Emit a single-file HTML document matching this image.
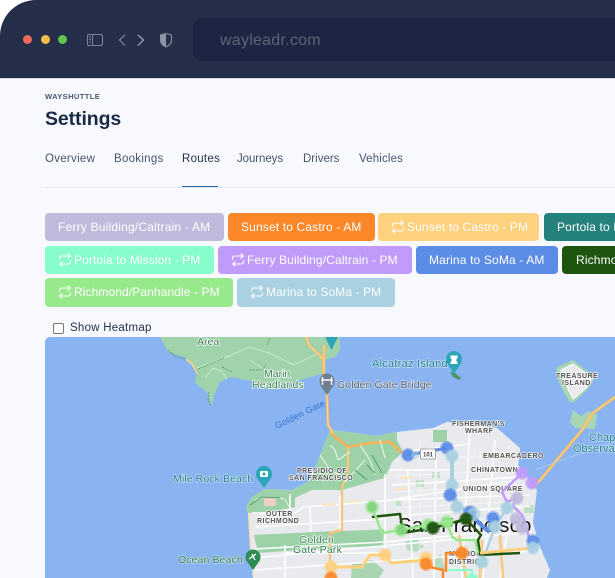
<!DOCTYPE html>
<html><head><meta charset="utf-8"><style>
html,body{margin:0;padding:0;width:615px;height:578px;overflow:hidden;background:#fff}
body{position:relative;font-family:"Liberation Sans",sans-serif}
.a{position:absolute}
.page{left:0;top:79px;width:615px;height:499px;background:#f8f9ff}
.bar{left:0;top:0;width:640px;height:78px;background:#252f4a;border-top-left-radius:36px;border-bottom:1px solid #d5d8e0}
.addr{left:193px;top:18px;width:440px;height:43px;background:#1c2642;border-radius:9px}
.url{left:220px;top:32px;font-size:16px;color:#5b6479;letter-spacing:.25px;line-height:18px}
.dot{width:9px;height:9px;border-radius:50%;top:35px}
.t{top:152px;font-size:11.5px;line-height:14px;color:#47546d;letter-spacing:.28px;white-space:nowrap}
.c{height:28px;border-radius:4px;color:#fff;font-size:12px;line-height:28px;white-space:nowrap;overflow:hidden;letter-spacing:.15px;box-sizing:border-box}
.c svg{position:absolute;left:13px;top:7px}
.c span{position:absolute;top:0}
</style></head><body>
<div class="a page"></div>
<div class="a bar"></div>
<div class="a addr"></div>
<div class="a url">wayleadr.com</div>
<div class="a dot" style="left:23px;background:#ee6a5f"></div>
<div class="a dot" style="left:41px;background:#f5bd4f"></div>
<div class="a dot" style="left:58px;background:#61c454"></div>
<svg class="a" style="left:80px;top:25px" width="100" height="30" viewBox="0 0 100 30" fill="none">
<rect x="7.500" y="9.500" width="15" height="11" rx="1.500" stroke="#7b8496"/><path d="M12.500 9.500v11" stroke="#7b8496"/><path d="M9 12h2M9 14.500h2M9 17h2" stroke="#7b8496"/>
<path d="M45 10l-5.500 5 5.500 5.500" stroke="#7b8496" stroke-width="1.200"/><path d="M58 10l5.500 5-5.500 5.500" stroke="#a4abb8" stroke-width="1.200"/>
<path d="M86 8.500l5.500 1.500v5.500c0 3-2.500 5-5.500 6.500-3-1.500-5.500-3.500-5.500-6.500V10z" stroke="#8c96a6" fill="#252f4a"/><path d="M86 8.500l-5.500 1.500v5.500c0 3 2.500 5 5.500 6.500z" fill="#8c96a6"/>
</svg>

<div class="a" style="left:45px;top:92px;font-size:7.500px;line-height:10px;font-weight:bold;letter-spacing:.42px;color:#4a566e">WAYSHUTTLE</div>
<div class="a" style="left:45px;top:107px;font-size:19.500px;line-height:25px;font-weight:bold;letter-spacing:-.1px;color:#1b2a45">Settings</div>
<div class="a t" style="left:45px">Overview</div>
<div class="a t" style="left:114px">Bookings</div>
<div class="a t" style="left:182px;color:#25324c">Routes</div>
<div class="a t" style="left:237px;letter-spacing:-.08px">Journeys</div>
<div class="a t" style="left:303px;letter-spacing:0">Drivers</div>
<div class="a t" style="left:359px;letter-spacing:.15px">Vehicles</div>
<div class="a" style="left:45px;top:187px;width:570px;height:1px;background:#e3e9f2"></div>
<div class="a" style="left:182px;top:186px;width:36px;height:1px;background:#2b68b0"></div>

<svg width="0" height="0" style="position:absolute"><defs><g id="r" fill="none" stroke="#fff" stroke-width="1.100" stroke-linecap="round" stroke-linejoin="round"><path d="M1.500 6.500V5a2 2 0 0 1 2-2h8.500M10 .8L12.300 3 10 5.200M12.500 7.500V9a2 2 0 0 1-2 2H2M4 8.800L1.700 11 4 13.200"/></g></defs></svg>

<div class="a c" style="left:45px;top:213px;width:179px;background:#c0bbdc"><span style="left:13px;letter-spacing:.2px">Ferry Building/Caltrain - AM</span></div>
<div class="a c" style="left:228px;top:213px;width:147px;background:#fb8728"><span style="left:13px">Sunset to Castro - AM</span></div>
<div class="a c" style="left:378px;top:213px;width:161px;background:#fed17f"><svg width="14" height="14"><use href="#r"/></svg><span style="left:29px">Sunset to Castro - PM</span></div>
<div class="a c" style="left:544px;top:213px;width:90px;background:#25817b;border-radius:4px 0 0 4px"><span style="left:13px">Portola to Mission</span></div>
<div class="a c" style="left:45px;top:246px;width:169px;background:#87fdcb"><svg width="14" height="14"><use href="#r"/></svg><span style="left:29px;letter-spacing:.1px">Portola to Mission - PM</span></div>
<div class="a c" style="left:218px;top:246px;width:194px;background:#c09bf9"><svg width="14" height="14"><use href="#r"/></svg><span style="left:29px;letter-spacing:.12px">Ferry Building/Caltrain - PM</span></div>
<div class="a c" style="left:416px;top:246px;width:142px;background:#5b8ce6"><span style="left:13px">Marina to SoMa - AM</span></div>
<div class="a c" style="left:562px;top:246px;width:70px;background:#1f540f;border-radius:4px 0 0 4px"><span style="left:14px">Richmond/Panhandle</span></div>
<div class="a c" style="left:45px;top:278px;width:188px;height:29px;background:#98e88c"><svg width="14" height="14"><use href="#r"/></svg><span style="left:29px;letter-spacing:.1px">Richmond/Panhandle - PM</span></div>
<div class="a c" style="left:237px;top:278px;width:158px;height:29px;background:#a9d1e1"><svg width="14" height="14"><use href="#r"/></svg><span style="left:29px;letter-spacing:.1px">Marina to SoMa - PM</span></div>

<div class="a" style="left:53px;top:323px;width:9px;height:9px;border:1px solid #767676;border-radius:2px;background:#fff"></div>
<div class="a" style="left:70px;top:321px;font-size:11.500px;line-height:14px;color:#25324c;letter-spacing:.25px">Show Heatmap</div>

<svg class="a" style="left:0;top:0" width="615" height="578" viewBox="0 0 615 578">
<defs><clipPath id="m"><path d="M45 578V342a5 5 0 0 1 5-5H615V578z"/></clipPath>
<clipPath id="sf"><path id="sfp" d="M253 578L250 550 248 513 246 507 252 497 265 489 292 490 308 482 317 463 325 443 330 430 350 432 375 436 397 432 433 428 447 422 470 424 497 428 520 448 518 465 537 490 533 523 540 547 550 570 547 578z"/></clipPath></defs>
<g clip-path="url(#m)">
<rect x="45" y="337" width="570" height="241" fill="#8ab4f1"/>
<!-- Marin -->
<path d="M160 337L168 352 187 358 197 372 195 383 207 392 212 407 214 395 220 382 230 377 252 381 273 390 290 383 307 378 322 374 324 360 335 357 340 350 340 337z" fill="#a0d3ab"/>
<path d="M197 368l10-4 22-8 20-9 20 6 25 12 25-12M205 378l8-10 8 3 6 8M250 360l15 10 15 2 12 6" fill="none" stroke="#c9e7cd" stroke-width="1"/>
<path d="M168 350l8 7 10 2 10 10 3 4M209 392l-1 8 3 6M198 369l14-6 12-5M222 367l10 5M250 370l12 0 4-6M270 338l-3 7" fill="none" stroke="#4f9a63" stroke-width=".8" stroke-dasharray="2 1"/>
<path d="M186 359l6 5 6 10" fill="none" stroke="#f7d48f" stroke-width="1.800"/>
<path d="M306 337l3 8 8 8 6 6 1 18" fill="none" stroke="#f3b45c" stroke-width="2.800"/>
<path d="M306 337l3 8 8 8 6 6 1 18" fill="none" stroke="#fbd89b" stroke-width="1.300"/>
<!-- Alcatraz, Treasure -->
<path d="M450 372l5 1 6 5-2 2-6-3z" fill="#4e9464"/>
<path d="M557 367l16-7 18 14 3 6-7 10-14 13-4-2-8-14-5-12z" fill="#a6d7b2"/>
<path d="M561 370l12-6 16 12 2 4-5 8-13 11-5-10-5-12z" fill="#e8eaed" stroke="#fff"/>
<path d="M573 410l-3 12 5 6 20 1 2-14-8-4-8 5z" fill="#a6d7b2"/>
<!-- SF -->
<use href="#sfp" fill="#e8eaed"/>
<g clip-path="url(#sf)">
<path d="M248 513L270 512 295 507 295 498 312 490 342 490 370 482 385 478 392 462 403 452 397 440 397 428 330 425 320 440 300 480 262 486 244 505z" fill="#9dd2a8"/>
<path d="M254 535l60-3 54-2 16-1-1 17-55 2-70 5z" fill="#9dd2a8"/>
<path d="M433 430h14v12h-14z" fill="#9dd2a8"/>
<path d="M264 497h12v9h-12z" fill="#eecfc8"/>
<path d="M352 564l20-4 12 10-5 8h-28z" fill="#a9d5b2"/>
<path d="M405 541l12-2 7 8-8 5-9-2zM441 554l-8 6 4 10h8z" fill="#b6dcc0"/>
<path d="M416 480h8v7h-8zM432 472h8v6h-8zM396 500h5v6h-5zM524 505h10v8h-10z" fill="#bfe0c5"/>
<g fill="none" stroke="#fff" stroke-width="1.500">
<path d="M252 513h43l8-6 80-6 130-20M255 527l128-8M254 549l130-7 150-14M290 516v-22M310 507l1 25M340 496v35M385 474v80M408 470l5 108M436 450l-2 128M470 424l-8 154M495 440l-12 138M520 450l-20 128M253 558l280-26M255 570l290-20"/>
<path d="M390 470h60M392 485l130-8M395 500l135-5M398 516l132-10M400 452l70-8M285 545v33M286 553l100 0"/>
</g>
<g fill="none" stroke="#f6f7f8" stroke-width=".700"><path d="M420 442v130M450 440v130M480 445v130M395 460l130-6M395 476l130-6M395 492l130-7M395 508l130-7M460 520l40 30"/></g>
<path d="M248 513l4 65" fill="none" stroke="#f7e4b5" stroke-width="3.500"/>
<path d="M322 505l14-1M347 502l14-1M450 508l20-1M400 478l12-1M395 489l12-1" stroke="#fbe6bc" stroke-width="2"/>
<path d="M330 430l4 6 14 11 22-4 20-1 12 11" fill="none" stroke="#f3b45c" stroke-width="2.800"/>
<path d="M348 447v26l-6 14v43l-12 3v30" fill="none" stroke="#f3b45c" stroke-width="2.200"/>
<path d="M348 447v26l-6 14v43l-12 3v30" fill="none" stroke="#fcd99a" stroke-width="1"/>
<path d="M459 535l7 43M482 540l-2 38M500 535l3 43" fill="none" stroke="#f6bd65" stroke-width="2.500"/>
<path d="M459 535l7 43M482 540l-2 38M500 535l3 43" fill="none" stroke="#fbd99b" stroke-width="1"/>
<path d="M330 445l5 5 3 10 12-8M300 480l20-10M360 445l10 15 5 15M365 460l-20 22M380 440l5 18M255 500l10-3 20 2 4 8M320 455l10 15 10 5" fill="none" stroke="#fff" stroke-width=".8"/>
<path d="M355 470l12 10M372 455l10 18M367 465l8 8M250 505l12-8 18 1" stroke="#4d9a63" stroke-width=".9" fill="none"/>
</g>
<!-- bridge -->
<path d="M324 345v33l3 17 1 30 5 8" fill="none" stroke="#f3b45c" stroke-width="2.800"/>
<path d="M324 345v33l3 17 1 30 5 8" fill="none" stroke="#fcd99a" stroke-width="1.200"/>
<path d="M536 485l46-55 11-17 22-16" fill="none" stroke="#f3b45c" stroke-width="3"/>
<path d="M536 485l46-55 11-17 22-16" fill="none" stroke="#fcd99a" stroke-width="1.100"/>
<path d="M536 470l20-8 59-20" fill="none" stroke="#b5cbed" stroke-width=".8"/>
<!-- Labels -->
<text x="398" y="532" font-size="20.500" fill="#111" stroke="#fff" stroke-width="1.500" paint-order="stroke" style="letter-spacing:.2px">San Francisco</text>
<g stroke="#fff" stroke-width="1.500" paint-order="stroke" stroke-linejoin="round">
<text x="197" y="345" font-size="10.500" fill="#2f7d4a">Area</text>
<text x="264" y="377" font-size="10.500" fill="#2f7d4a">Marin</text>
<text x="252" y="388" font-size="10.500" fill="#2f7d4a" style="letter-spacing:.2px">Headlands</text>
<text x="372" y="367" font-size="11" fill="#1f7f90" stroke="#cfe4f7" stroke-width="1.300" style="letter-spacing:.25px">Alcatraz Island</text>
<text x="337" y="388" font-size="10.500" fill="#4f5d6e" stroke="#dbe6f5" stroke-width="1.300" style="letter-spacing:.1px">Golden Gate Bridge</text>
<g font-size="7" font-weight="bold" fill="#505050" stroke-width="1.200" style="letter-spacing:.45px">
<text x="556" y="378">TREASURE</text>
<text x="562" y="385">ISLAND</text>
<text x="452" y="426">FISHERMAN'S</text>
<text x="465" y="433">WHARF</text>
<text x="483" y="458">EMBARCADERO</text>
<text x="471" y="472">CHINATOWN</text>
<text x="463" y="491">UNION SQUARE</text>
<text x="449" y="556">MISSION</text>
<text x="449" y="564">DISTRICT</text>
<text x="297" y="473">PRESIDIO OF</text>
<text x="289" y="480">SAN FRANCISCO</text>
<text x="266" y="516">OUTER</text>
<text x="257" y="523">RICHMOND</text>
</g>
<text x="589" y="441" font-size="11" fill="#1f7f90" stroke="#cfe4f7" stroke-width="1.300">Chap</text>
<text x="573" y="452" font-size="11" fill="#1f7f90" stroke="#cfe4f7" stroke-width="1.300">Observat</text>
<text x="299" y="543" font-size="10.500" fill="#2f7d4a" style="letter-spacing:.2px">Golden</text>
<text x="293" y="553" font-size="10.500" fill="#2f7d4a" style="letter-spacing:.2px">Gate Park</text>
<text x="173" y="482" font-size="10.500" fill="#1f7f90" stroke="#cfe4f7" stroke-width="1.300" style="letter-spacing:.1px">Mile Rock Beach</text>
<text x="178" y="563" font-size="10.500" fill="#2f7d4a" stroke="#cfe4f7" stroke-width="1.300" style="letter-spacing:.1px">Ocean Beach</text>
<text x="0" y="0" transform="translate(277 429) rotate(-26)" font-size="9" fill="#2f71cf" stroke="none" style="letter-spacing:.3px">Golden Gate</text>
</g>
<!-- Routes -->
<g fill="none" stroke-linejoin="round">
<path d="M408 455L447 448" stroke="#5b8ce6" stroke-width="3"/>
<path d="M452 456L452 485 457 507 473 513" stroke="#a9d1e1" stroke-width="4"/>
<path d="M470 512L478 522 488 531 493 518" stroke="#5b8ce6" stroke-width="4"/>
<path d="M507 508L495 527 482 562" stroke="#a9d1e1" stroke-width="2.500"/>
<path d="M522 473L502 492 507 502 516 498 513 506 522 515 526 525 530 542" stroke="#c09bf9" stroke-width="2.500"/>
<path d="M372 517L400 514 403 533 433 528 466 519 481 535 478 540 480 555 520 553" stroke="#1f540f" stroke-width="2.500"/>
<path d="M372 507L382 533 401 530 428 525 447 522 452 537 457 540 475 540 478 553" stroke="#98e88c" stroke-width="2.500"/>
<path d="M331 567L362 567 370 555 385 555 391 563 426 560" stroke="#fed17f" stroke-width="3"/>
<path d="M480 553L533 548" stroke="#fed17f" stroke-width="3"/>
<path d="M462 553H446V572M426 566L443 570V578" stroke="#fb8728" stroke-width="2.500"/>
<path d="M472 578V570H448" stroke="#87fdcb" stroke-width="2"/>
</g>
<g stroke-width="3" fill-opacity=".95" stroke-opacity=".5">
<circle cx="408" cy="455" r="5.500" fill="#5b8ce6" stroke="#5b8ce6"/>
<circle cx="415" cy="455" r="4" fill="#a9d1e1" fill-opacity=".5" stroke="none"/>
<circle cx="447" cy="448" r="5.500" fill="#5b8ce6" stroke="#5b8ce6"/>
<circle cx="452" cy="456" r="5.500" fill="#a9d1e1" stroke="#a9d1e1"/>
<circle cx="452" cy="485" r="5.500" fill="#a9d1e1" stroke="#a9d1e1"/>
<circle cx="450" cy="495" r="5.500" fill="#5b8ce6" stroke="#5b8ce6"/>
<circle cx="457" cy="507" r="5.500" fill="#a9d1e1" stroke="#a9d1e1"/>
<circle cx="470" cy="512" r="5.500" fill="#5b8ce6" stroke="#5b8ce6"/>
<circle cx="474" cy="514" r="5.500" fill="#a9d1e1" fill-opacity=".6" stroke="#a9d1e1"/>
<circle cx="493" cy="518" r="5.500" fill="#5b8ce6" stroke="#5b8ce6"/>
<circle cx="507" cy="508" r="5.500" fill="#a9d1e1" stroke="#a9d1e1"/>
<circle cx="495" cy="527" r="5.500" fill="#a9d1e1" stroke="#a9d1e1"/>
<circle cx="522" cy="473" r="5.500" fill="#c09bf9" stroke="#c09bf9"/>
<circle cx="532" cy="483" r="5.500" fill="#c09bf9" stroke="#c09bf9"/>
<circle cx="517" cy="498" r="5.500" fill="#c0bbdc" stroke="#c0bbdc"/>
<circle cx="516" cy="519" r="5.500" fill="#c0bbdc" stroke="#c0bbdc"/>
<circle cx="522" cy="528" r="5.500" fill="#c0bbdc" stroke="#c0bbdc"/>
<circle cx="533" cy="541" r="5.500" fill="#5b8ce6" stroke="#5b8ce6"/>
<circle cx="533" cy="548" r="5.500" fill="#a9d1e1" stroke="#a9d1e1"/>
<circle cx="482" cy="562" r="5.500" fill="#a9d1e1" stroke="#a9d1e1"/>
<circle cx="372" cy="507" r="5.500" fill="#7ed37a" stroke="#98e88c"/>
<circle cx="401" cy="530" r="5.500" fill="#7ed37a" stroke="#98e88c"/>
<circle cx="428" cy="525" r="5.500" fill="#98e88c" stroke="#98e88c"/>
<circle cx="447" cy="522" r="5.500" fill="#98e88c" stroke="#98e88c"/>
<circle cx="433" cy="528" r="5.500" fill="#1f540f" stroke="#1f540f"/>
<circle cx="466" cy="519" r="5.500" fill="#1f540f" stroke="#1f540f"/>
<circle cx="385" cy="555" r="5.500" fill="#fed17f" stroke="#fed17f"/>
<circle cx="331" cy="567" r="5.500" fill="#fed17f" stroke="#fed17f"/>
<circle cx="426" cy="558" r="5.500" fill="#fed17f" stroke="#fed17f"/>
<circle cx="426" cy="564" r="5.500" fill="#fb8728" stroke="#fb8728"/>
<circle cx="462" cy="553" r="5.500" fill="#fb8728" stroke="#fb8728"/>
<circle cx="331" cy="578" r="5.500" fill="#fb8728" stroke="#fb8728"/>
<circle cx="472" cy="580" r="5.500" fill="#87fdcb" stroke="#87fdcb"/>
</g>
<!-- highway shield -->
<path d="M421 449h14l1 3-1 7h-14l-1-7z" fill="#fff" stroke="#555" stroke-width=".6"/>
<text x="423" y="456.500" font-size="6" font-weight="bold" fill="#444">101</text>
<!-- Pins -->
<g>
<path d="M325 337h13l-6.500 13z" fill="#2da5b8"/>
<circle cx="327" cy="381" r="7.500" fill="#6f7f92"/><path d="M320 385l7 10 7-10z" fill="#6f7f92"/><path d="M322.500 377v8M331.500 377v8M321 380h12" stroke="#fff" stroke-width="1.400" fill="none"/>
<circle cx="454" cy="359" r="8" fill="#2da5b8"/><path d="M447 363l7 11 7-11z" fill="#2da5b8"/><path d="M450.500 364v-1.500l1.500-2.500-1.500-2v-2.500h7V358l-1.500 2 1.500 2.500V364z" fill="#fff"/>
<circle cx="264" cy="474" r="8" fill="#2da5b8"/><path d="M257 478l7 10 7-10z" fill="#2da5b8"/><rect x="260" y="471" width="8" height="6" rx="1" fill="#fff"/><circle cx="264" cy="474" r="1.500" fill="#2da5b8"/>
<circle cx="253" cy="557" r="7.500" fill="#2f8a55"/><path d="M246 560l7 10 7-10z" fill="#2f8a55"/><path d="M249 559l7-5M252 554l3 6" stroke="#fff" stroke-width="1.300"/>
</g>
</g>
</svg>
</body></html>
